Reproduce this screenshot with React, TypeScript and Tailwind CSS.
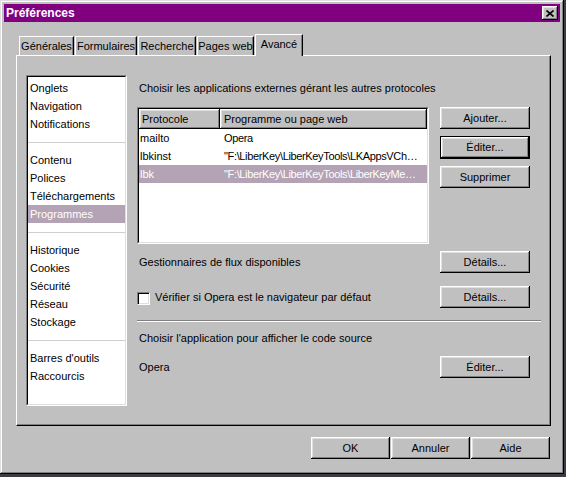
import React from "react";

const raised =
    "bg-[#c0c0c0] shadow-[inset_-1px_-1px_#000,inset_1px_1px_#fff,inset_-2px_-2px_#808080,inset_2px_2px_#dfdfdf]";

function Btn({ label, isDefault, className }: { label: string; isDefault?: boolean; className?: string }) {
    return (
        <button
            type="button"
            className={
                "flex items-center justify-center text-black leading-none " +
                raised +
                (isDefault ? " border border-black" : "") +
                (className ? " " + className : "")
            }
        >
            {label}
        </button>
    );
}

const sections = [
    ["Onglets", "Navigation", "Notifications"],
    ["Contenu", "Polices", "Téléchargements", "Programmes"],
    ["Historique", "Cookies", "Sécurité", "Réseau", "Stockage"],
    ["Barres d'outils", "Raccourcis"],
];

const tabs = ["Générales", "Formulaires", "Recherche", "Pages web"];
const tabWidths = ["w-[55px]", "w-[62px]", "w-[58px]", "w-[57px]"];

const rows = [
    { proto: "mailto", prog: "Opera" },
    { proto: "lbkinst", prog: '"F:\\LiberKey\\LiberKeyTools\\LKAppsVCh…' },
    { proto: "lbk", prog: '"F:\\LiberKey\\LiberKeyTools\\LiberKeyMe…', selected: true },
];

export default function App() {
    return (
        <div className="w-[566px] h-[477px] bg-[#3c3c44] overflow-hidden font-['Liberation_Sans',Arial,sans-serif] text-[11px] text-black">
            {/* window */}
            <div className="w-[564px] h-[474px] bg-[#c0c0c0] p-[4px] flex flex-col shadow-[inset_-1px_-1px_#000,inset_1px_1px_#dfdfdf,inset_-2px_-2px_#808080,inset_2px_2px_#fff]">
                {/* title bar */}
                <div className="h-[18px] bg-[#800080] flex items-center justify-between pl-[2px] pr-[2px]">
                    <span className="text-white font-bold text-[12px] leading-none">Préférences</span>
                    <div className={"w-[16px] h-[14px] flex items-center justify-center " + raised}>
                        <svg width="8" height="7" viewBox="0 0 8 7">
                            <path d="M0.5 0.5 L7.5 6.5 M7.5 0.5 L0.5 6.5" stroke="#000" strokeWidth="1.6" />
                        </svg>
                    </div>
                </div>

                <div className="ml-[12px] w-[535px] flex flex-col">
                    {/* tabs */}
                    <div className="mt-[12px] h-[21px] flex items-end pl-[3px] gap-[1px]">
                        {tabs.map((t, i) => (
                            <div
                                key={t}
                                className={
                                    "h-[19px] flex items-center justify-center border-l border-t border-white border-r border-r-black shadow-[inset_-1px_0_#808080] leading-none " +
                                    tabWidths[i]
                                }
                            >
                                {t}
                            </div>
                        ))}
                        <div className="relative z-10 -mb-px h-[22px] w-[48px] bg-[#c0c0c0] flex items-center justify-center pb-[2px] border-l border-t border-white border-r border-r-black shadow-[inset_-1px_0_#808080] leading-none">
                            Avancé
                        </div>
                    </div>

                    {/* panel */}
                    <div className="h-[371px] flex pl-[9px] pt-[19px] border border-t-white border-l-white border-r-black border-b-black shadow-[inset_-1px_-1px_#808080]">
                        {/* left list */}
                        <div className="w-[101px] h-[331px] border border-t-[#808080] border-l-[#808080] border-r-white border-b-white">
                            <div className="h-full bg-white border border-t-black border-l-black border-r-[#dfdfdf] border-b-[#dfdfdf] pt-[2px] flex flex-col">
                                {sections.map((items, si) => (
                                    <React.Fragment key={si}>
                                        {si > 0 && (
                                            <div className="h-[18px] flex items-center">
                                                <div className="h-px w-full bg-[#cfcfcf]" />
                                            </div>
                                        )}
                                        {items.map((it) => (
                                            <div
                                                key={it}
                                                className={
                                                    "h-[18px] flex items-center pl-[2px] leading-none whitespace-nowrap " +
                                                    (it === "Programmes" ? "bg-[#b4a3b4] text-white" : "")
                                                }
                                            >
                                                {it}
                                            </div>
                                        ))}
                                    </React.Fragment>
                                ))}
                            </div>
                        </div>

                        {/* right column */}
                        <div className="ml-[10px] w-[404px] flex flex-col pt-[4px]">
                            <div className="h-[18px] flex items-center pl-[2px] leading-none">
                                Choisir les applications externes gérant les autres protocoles
                            </div>

                            <div className="mt-[10px] flex">
                                {/* table */}
                                <div className="w-[292px] h-[137px] border border-t-[#808080] border-l-[#808080] border-r-white border-b-white">
                                    <div className="h-full bg-white border border-t-black border-l-black border-r-[#dfdfdf] border-b-[#dfdfdf] flex flex-col">
                                        <div className="h-[20px] flex">
                                            <div className={"w-[81px] h-full flex items-center pl-[3px] leading-none " + raised}>Protocole</div>
                                            <div className={"flex-1 h-full flex items-center pl-[4px] leading-none " + raised}>
                                                Programme ou page web
                                            </div>
                                        </div>
                                        {rows.map((r) => (
                                            <div
                                                key={r.proto}
                                                className={
                                                    "h-[18px] flex items-center leading-none " +
                                                    (r.selected ? "bg-[#b4a3b4] text-white" : "")
                                                }
                                            >
                                                <div className="w-[81px] pl-[1px]">{r.proto}</div>
                                                <div className="flex-1 pl-[4px] whitespace-nowrap tracking-[-0.35px]">{r.prog}</div>
                                            </div>
                                        ))}
                                    </div>
                                </div>

                                <div className="ml-[11px] flex flex-col">
                                    <Btn label="Ajouter..." className="w-[90px] h-[22px]" />
                                    <Btn label="Éditer..." isDefault className="mt-[7px] w-[90px] h-[23px]" />
                                    <Btn label="Supprimer" className="mt-[7px] w-[90px] h-[22px]" />
                                </div>
                            </div>

                            <div className="mt-[7px] w-[393px] h-[22px] flex items-center justify-between">
                                <span className="pl-[2px] leading-none">Gestionnaires de flux disponibles</span>
                                <Btn label="Détails..." className="w-[90px] h-[22px]" />
                            </div>

                            <div className="mt-[13px] w-[393px] h-[22px] flex items-center justify-between">
                                <div className="flex items-center gap-[5px] pt-[3px]">
                                    <div className="w-[13px] h-[13px] bg-white border border-t-[#808080] border-l-[#808080] border-r-white border-b-white shadow-[inset_1px_1px_#000,inset_-1px_-1px_#dfdfdf]" />
                                    <span className="leading-none -mt-[3px]">Vérifier si Opera est le navigateur par défaut</span>
                                </div>
                                <Btn label="Détails..." className="w-[90px] h-[22px]" />
                            </div>

                            <div className="mt-[12px] w-[404px] h-[2px] border-t border-t-[#808080] border-b border-b-white" />

                            <div className="mt-[7px] h-[18px] flex items-center pl-[2px] leading-none">
                                Choisir l'application pour afficher le code source
                            </div>

                            <div className="mt-[9px] w-[393px] h-[22px] flex items-center justify-between">
                                <span className="pl-[2px] leading-none">Opera</span>
                                <Btn label="Éditer..." className="w-[90px] h-[22px]" />
                            </div>
                        </div>
                    </div>

                    {/* bottom buttons */}
                    <div className="mt-[11px] flex justify-end gap-[1px] pr-[1px]">
                        <Btn label="OK" className="w-[79px] h-[22px]" />
                        <Btn label="Annuler" className="w-[79px] h-[22px]" />
                        <Btn label="Aide" className="w-[79px] h-[22px]" />
                    </div>
                </div>
            </div>
        </div>
    );
}
